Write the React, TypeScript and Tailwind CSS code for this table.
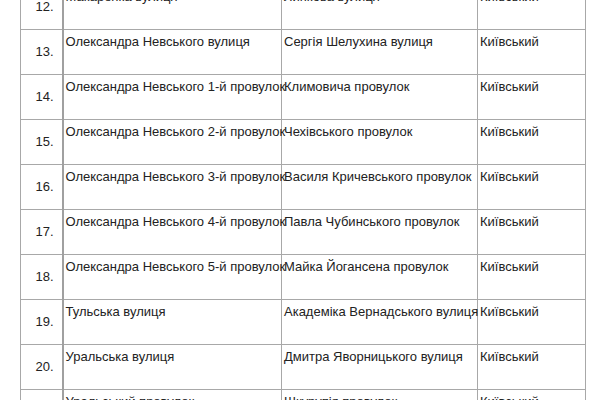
const rows = [
  ['12.', 'Макаренка вулиця', 'Липкова вулиця', 'Київський'],
  ['13.', 'Олександра Невського вулиця', 'Сергія Шелухина вулиця', 'Київський'],
  ['14.', 'Олександра Невського 1-й провулок', 'Климовича провулок', 'Київський'],
  ['15.', 'Олександра Невського 2-й провулок', 'Чехівського провулок', 'Київський'],
  ['16.', 'Олександра Невського 3-й провулок', 'Василя Кричевського провулок', 'Київський'],
  ['17.', 'Олександра Невського 4-й провулок', 'Павла Чубинського провулок', 'Київський'],
  ['18.', 'Олександра Невського 5-й провулок', 'Майка Йогансена провулок', 'Київський'],
  ['19.', 'Тульська вулиця', 'Академіка Вернадського вулиця', 'Київський'],
  ['20.', 'Уральська вулиця', 'Дмитра Яворницького вулиця', 'Київський'],
  ['21.', 'Уральський провулок', 'Шкурупія провулок', 'Київський'],
];

export default function App() {
  return (
    <div className="h-[400px] w-[600px] overflow-hidden bg-white">
      <table
        className="ml-[20px] mt-[-16px] w-[565px] table-fixed border-collapse text-[13px] text-[#222]"
        style={{ fontFamily: '"Liberation Sans", Arial, sans-serif' }}
      >
        <colgroup>
          <col className="w-[42px]" />
          <col className="w-[219px]" />
          <col className="w-[196px]" />
          <col className="w-[108px]" />
        </colgroup>
        <tbody>
          {rows.map((r) => (
            <tr key={r[0]} className="h-[45px]">
              <td className="border border-r-2 border-[#a8a8a8] border-r-[#a0a0a0] pr-[8px] text-right align-middle">
                {r[0]}
              </td>
              <td className="whitespace-nowrap border border-[#a8a8a8] pl-[2px] pt-[2px] align-top">{r[1]}</td>
              <td className="whitespace-nowrap border border-[#a8a8a8] pl-[2px] pt-[2px] align-top">{r[2]}</td>
              <td className="whitespace-nowrap border border-[#a8a8a8] pl-[2px] pt-[2px] align-top">{r[3]}</td>
            </tr>
          ))}
        </tbody>
      </table>
    </div>
  );
}
